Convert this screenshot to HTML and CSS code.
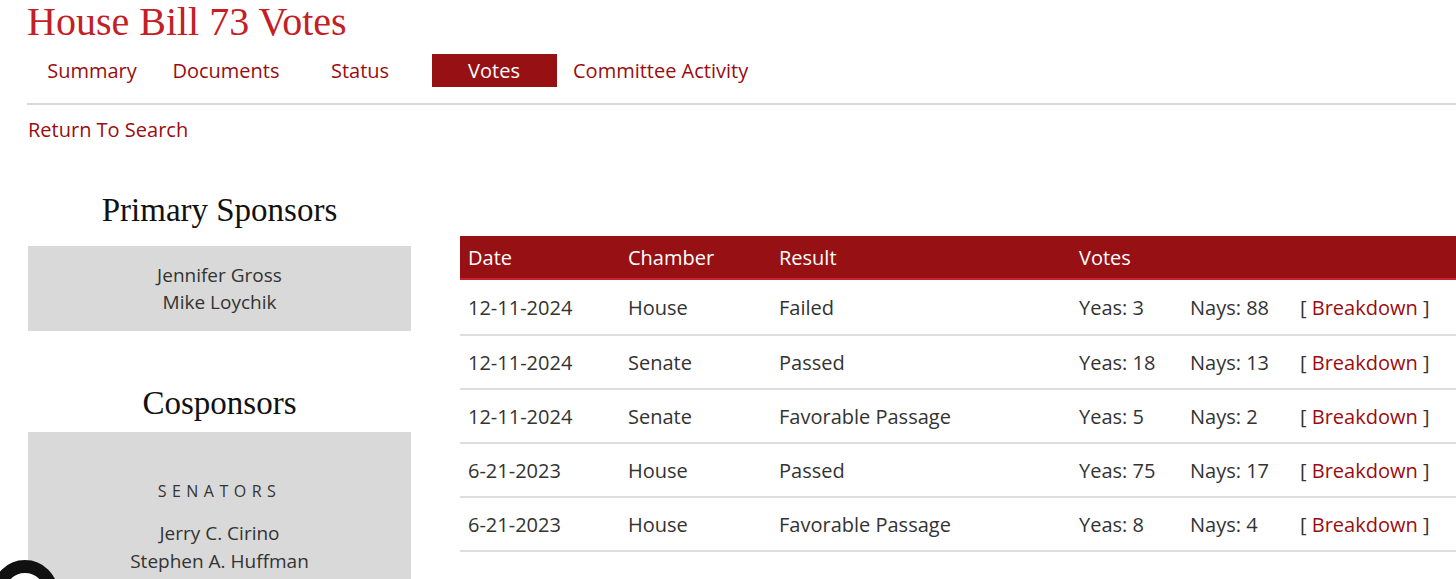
FILE: index.html
```html
<!DOCTYPE html>
<html lang="en">
<head>
<meta charset="utf-8">
<title>House Bill 73 Votes</title>
<link rel="stylesheet" href="styles.css">
</head>
<body>
<div class="page">
  <h1 class="title">House Bill 73 Votes</h1>
  <nav class="tabs">
    <a class="tab" href="#">Summary</a>
    <a class="tab" href="#">Documents</a>
    <a class="tab" href="#">Status</a>
    <a class="tab active" href="#">Votes</a>
    <a class="tab wide" href="#">Committee Activity</a>
  </nav>
  <div class="rule"></div>
  <a class="return" href="#">Return To Search</a>

  <div class="content">
    <aside class="sidebar">
      <h2 class="side-head first">Primary Sponsors</h2>
      <div class="side-box primary">
        <div class="name">Jennifer Gross</div>
        <div class="name">Mike Loychik</div>
      </div>
      <h2 class="side-head second">Cosponsors</h2>
      <div class="side-box cos">
        <div class="group">SENATORS</div>
        <div class="name">Jerry C. Cirino</div>
        <div class="name">Stephen A. Huffman</div>
      </div>
    </aside>

    <section class="votes">
      <table class="vote-table">
        <colgroup>
          <col class="c-date"><col class="c-chamber"><col class="c-result"><col class="c-yeas"><col class="c-nays"><col class="c-link">
        </colgroup>
        <thead>
          <tr><th>Date</th><th>Chamber</th><th>Result</th><th colspan="3">Votes</th></tr>
        </thead>
        <tbody>
          <tr class="first-row"><td>12-11-2024</td><td>House</td><td>Failed</td><td>Yeas: 3</td><td>Nays: 88</td><td>[ <a href="#">Breakdown</a> ]</td></tr>
          <tr><td>12-11-2024</td><td>Senate</td><td>Passed</td><td>Yeas: 18</td><td>Nays: 13</td><td>[ <a href="#">Breakdown</a> ]</td></tr>
          <tr><td>12-11-2024</td><td>Senate</td><td>Favorable Passage</td><td>Yeas: 5</td><td>Nays: 2</td><td>[ <a href="#">Breakdown</a> ]</td></tr>
          <tr><td>6-21-2023</td><td>House</td><td>Passed</td><td>Yeas: 75</td><td>Nays: 17</td><td>[ <a href="#">Breakdown</a> ]</td></tr>
          <tr><td>6-21-2023</td><td>House</td><td>Favorable Passage</td><td>Yeas: 8</td><td>Nays: 4</td><td>[ <a href="#">Breakdown</a> ]</td></tr>
        </tbody>
      </table>
    </section>
  </div>
</div>
<svg class="corner-ring" width="66" height="66" viewBox="0 0 66 66" aria-hidden="true">
  <circle cx="33" cy="33" r="26.5" fill="#ffffff" stroke="#111111" stroke-width="13"/>
</svg>
</body>
</html>
```

FILE: styles.css
```css
html, body {
  margin: 0;
  padding: 0;
  overflow: hidden;
  background: #ffffff;
}
body {
  position: relative;
  height: 579px;
  font-family: "Open Sans", "Noto Sans", sans-serif;
  color: #333333;
}
.page {
  width: 1600px;
  padding-left: 27px;
}
a { text-decoration: none; }

.title {
  margin: 0;
  font-family: "Liberation Serif", "Times New Roman", serif;
  font-weight: normal;
  font-size: 40px;
  line-height: 44px;
  color: #c41e26;
}

.tabs {
  display: flex;
  margin-top: 10px;
  margin-left: -2px;
}
.tab {
  display: block;
  width: 125px;
  margin: 0 4.5px;
  height: 33px;
  line-height: 33px;
  text-align: center;
  font-size: 20px;
  color: #9a0c10;
}
.tab.active {
  background: #971014;
  color: #ffffff;
}
.tab.wide {
  width: auto;
  margin-left: 12px;
}

.rule {
  margin-top: 16px;
  height: 2px;
  background: #d9d9d9;
}

.return {
  display: block;
  margin-top: 11px;
  margin-left: 1px;
  font-size: 20px;
  line-height: 28px;
  color: #9a0c10;
}

.content {
  display: flex;
  align-items: flex-start;
  gap: 49px;
  margin-left: 1px;
}

.sidebar {
  width: 383px;
  flex: none;
}
.side-head {
  margin: 0;
  font-family: "Liberation Serif", "Times New Roman", serif;
  font-weight: normal;
  font-size: 33px;
  line-height: 40px;
  text-align: center;
  color: #111111;
}
.side-head.first { margin-top: 46px; margin-bottom: 16px; }
.side-head.second { margin-top: 52px; margin-bottom: 9px; }

.side-box {
  background: #d9d9d9;
  text-align: center;
}
.side-box.primary { padding: 16px 0 15px; }
.side-box.cos { padding: 47px 0 20px; }
.name {
  font-size: 19px;
  line-height: 27px;
  color: #333333;
}
.cos .name { line-height: 28px; }
.group {
  font-size: 16px;
  line-height: 24px;
  letter-spacing: 5.5px;
  margin-bottom: 16px;
  color: #333333;
}

.votes {
  margin-top: 92px;
  flex: none;
}
.vote-table {
  width: 1100px;
  border-collapse: collapse;
  table-layout: fixed;
  font-size: 20px;
}
.c-date { width: 160px; }
.c-chamber { width: 151px; }
.c-result { width: 300px; }
.c-yeas { width: 111px; }
.c-nays { width: 110px; }
.c-link { width: auto; }

.vote-table th {
  background: #971014;
  color: #ffffff;
  font-weight: normal;
  text-align: left;
  height: 42px;
  padding: 0 8px;
  border-bottom: 2px solid #c9232b;
}
.vote-table td {
  height: 52px;
  padding: 0 8px;
  border-bottom: 2px solid #dedede;
  color: #333333;
  white-space: nowrap;
}
.vote-table .first-row td {
  height: 54px;
}
.vote-table td a {
  color: #9a0c10;
}

.corner-ring {
  position: absolute;
  left: -8px;
  top: 560px;
}
```
